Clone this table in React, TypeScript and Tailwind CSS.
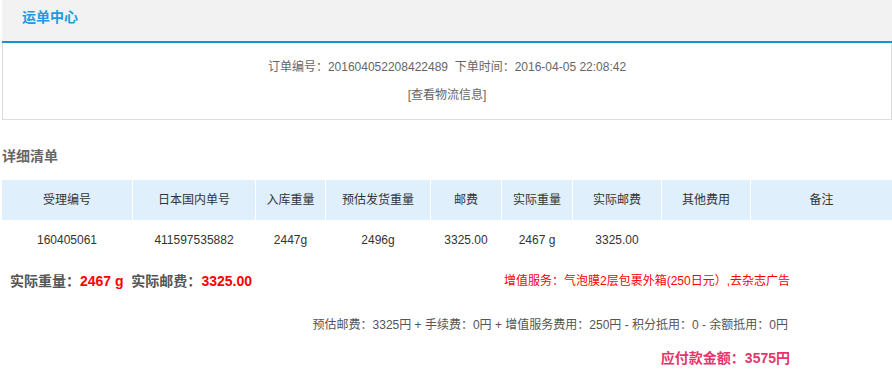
import React from 'react';

const cols = ['受理编号', '日本国内单号', '入库重量', '预估发货重量', '邮费', '实际重量', '实际邮费', '其他费用', '备注'];
const row = ['160405061', '411597535882', '2447g', '2496g', '3325.00', '2467 g', '3325.00', '', ''];

const grid = 'grid grid-cols-[130px_122px_69px_104px_70px_70px_88px_88px_1fr] gap-x-px';

export default function App() {
  return (
    <div className="w-[892px] h-[379px] bg-white text-[12px] text-[#333] font-['Liberation_Sans','Noto_Sans_CJK_SC',sans-serif]">
      {/* header */}
      <div className="ml-[2px] h-[43px] bg-[#f2f2f2] border-b-2 border-[#1a8fd3] pl-5 pt-[7px]">
        <span className="text-[14px] font-bold text-[#1a9be0]">运单中心</span>
      </div>

      {/* order box */}
      <div className="ml-[2px] h-[77px] border border-t-0 border-[#dcdcdc] flex flex-col items-center pt-[15px] text-[#666]">
        <div className="leading-[18px]">订单编号：201604052208422489&nbsp;&nbsp;下单时间：2016-04-05 22:08:42</div>
        <div className="leading-[18px] mt-[10px]">[查看物流信息]</div>
      </div>

      <div className="ml-[2px] mt-[26px] text-[14px] font-bold text-[#666] leading-[20px]">详细清单</div>

      {/* table */}
      <div className="ml-[2px] mt-[14px]">
        <div className={grid}>
          {cols.map((c) => (
            <div key={c} className="h-[40px] bg-[#dfeffc] flex items-center justify-center">{c}</div>
          ))}
        </div>
        <div className={grid}>
          {row.map((c, i) => (
            <div key={i} className="h-[40px] flex items-center justify-center">{c}</div>
          ))}
        </div>
      </div>

      {/* summary */}
      <div className="h-[42px] flex items-center pl-[10px] pr-[102px]">
        <div className="text-[14px] font-bold text-[#555]">
          实际重量：<span className="text-[#ff0000]">2467 g</span>&nbsp;&nbsp;实际邮费：<span className="text-[#ff0000]">3325.00</span>
        </div>
        <div className="ml-auto text-[#ff0000]">增值服务：气泡膜2层包裹外箱(250日元）,去杂志广告</div>
      </div>

      <div className="mt-[14px] pr-[104px] text-right text-[#555] leading-[18px]">
        预估邮费：3325円 + 手续费：0円 + 增值服务费用：250円 - 积分抵用：0 - 余额抵用：0円
      </div>

      <div className="mt-[14px] pr-[102px] text-right text-[14px] font-bold text-[#e8336d] leading-[20px]">
        应付款金额：3575円
      </div>
    </div>
  );
}
